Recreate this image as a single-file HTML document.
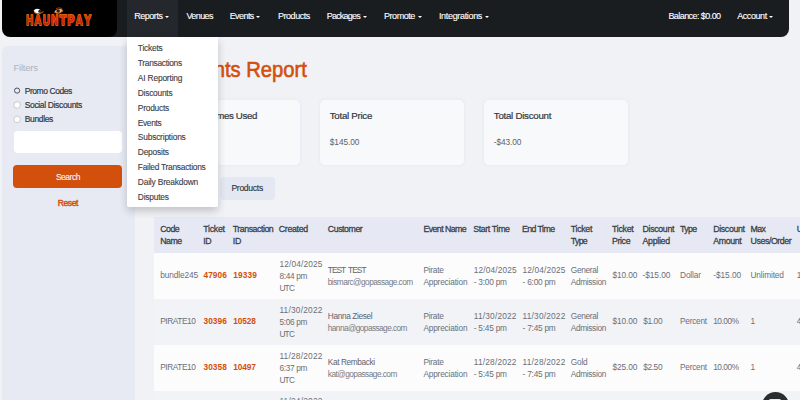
<!DOCTYPE html>
<html lang="en">
<head>
<meta charset="utf-8">
<title>Discounts Report</title>
<style>
*{box-sizing:border-box;margin:0;padding:0}
html,body{width:800px;height:400px;overflow:hidden}
body{background:#f1f2f6;font-family:"Liberation Sans",sans-serif;color:#3b4047;position:relative}
.a{position:absolute;white-space:nowrap}
/* navbar */
#nav{position:absolute;left:110px;top:0;width:679px;height:36.8px;background:#1a1d20;border-radius:0 0 8px 0}
#logo{position:absolute;left:2px;top:0;width:114.8px;height:36.8px;background:#000;border-radius:0 0 8px 8px}
#navact{position:absolute;left:126.8px;top:0;width:51.4px;height:36.8px;background:#24272b}
.ni{font-size:9px;line-height:10px;color:#fff;-webkit-text-stroke:0.12px #fff}
.caret{display:inline-block;width:0;height:0;border-left:2.1px solid transparent;border-right:2.1px solid transparent;border-top:2.3px solid #fff;vertical-align:1.3px;margin-left:2.6px}
/* sidebar */
#side{position:absolute;left:2px;top:46px;width:132.8px;height:360px;background:#e7eaf3;border-radius:6px 0 0 0}
.flt{color:#b0b5bd}
.rad{position:absolute;left:13.5px;width:6.6px;height:6.6px;border:0.8px solid #9a9ea6;border-radius:50%;background:#fff}
.rad.on{border-color:#555;background:#f4f4f6}
.rl{color:#33383f;-webkit-text-stroke:0.2px #33383f}
#inp{position:absolute;left:13.7px;top:131.2px;width:108.3px;height:21.8px;background:#fff;border-radius:4px}
#btn{position:absolute;left:13.2px;top:165px;width:109.3px;height:23px;background:#d34f0c;border-radius:4px}
.bt{color:#fdf3ee;-webkit-text-stroke:0.1px #fdf3ee}
.rs{color:#d34f0c;-webkit-text-stroke:0.45px #d34f0c}
/* dropdown */
#dd{position:absolute;left:126.8px;top:36.8px;width:90.8px;height:170.4px;background:#fff;border-radius:0 0 2px 2px;box-shadow:0 4px 9px rgba(0,0,0,.2)}
.di{color:#3b4047;-webkit-text-stroke:0.12px #3b4047}
/* main */
#h1{position:absolute;left:151.6px;top:56.9px;font-size:22.4px;line-height:26px;color:#d34f0c;white-space:nowrap;transform:scaleX(0.902);transform-origin:0 50%;-webkit-text-stroke:0.6px #d34f0c}
.card{position:absolute;top:99.6px;width:144px;height:65.5px;background:#f8f9fb;border-radius:5px;box-shadow:0 0 3px rgba(200,205,220,.35)}
.ct{color:#33383f;-webkit-text-stroke:0.2px #33383f}
.cv{color:#5d626a}
.tab{position:absolute;top:177px;height:22.5px;background:#e4e8f2;border-radius:4px}
.tt{color:#33383f;-webkit-text-stroke:0.15px #33383f}
/* table */
table{position:absolute;left:154.4px;top:217px;border-collapse:collapse;table-layout:fixed;width:706px}
th,td{padding:0 0 0 5.8px;text-align:left;vertical-align:middle;font-weight:normal;overflow:visible;white-space:nowrap}
th{font-size:8.8px;line-height:11.8px;color:#3a3f46;vertical-align:top;padding-top:7.4px;-webkit-text-stroke:0.28px #3a3f46}
thead tr{height:36px;background:#e6e9f3}
tbody tr{height:46px;background:#fcfcfd}
tbody tr:nth-child(even){background:#f2f3f7}
td{font-size:8.3px;line-height:11.8px;color:#6a6f77;padding-top:1.3px}
td.s{padding-top:0;padding-bottom:0.7px}
td.dt{padding-left:6.4px}
tbody tr:last-child td{padding-top:0;padding-bottom:0.6px}
td b{color:#d34f0c;font-weight:bold;position:relative;left:0.4px}
.nm{color:#5f646c}.em{color:#767b83}
#chat{position:absolute;left:761.5px;top:392.1px;width:27.4px;height:27.4px;border-radius:50%;background:#2b2c2f}
#chat i{position:absolute;left:7.8px;top:6.8px;width:12px;height:9px;border-radius:1.6px;background:#e9e9ec}
</style>
</head>
<body>
<div id="side"></div>
<div id="nav"></div>
<div id="navact"></div>
<div id="logo">
<svg width="116" height="37" viewBox="0 0 116 37" style="position:absolute;left:-2px;top:0">
<defs><linearGradient id="fl" x1="0" y1="0" x2="0" y2="1"><stop offset="0" stop-color="#e8440a"/><stop offset="0.5" stop-color="#cc2408"/><stop offset="1" stop-color="#b01806"/></linearGradient></defs>
<text y="25.3" font-family="Liberation Sans, sans-serif" font-weight="bold" font-size="15.4" fill="url(#fl)" stroke="#dc5e0c" stroke-width="2.1" stroke-linejoin="round" paint-order="stroke"><tspan x="26.2" textLength="6.9" lengthAdjust="spacingAndGlyphs">H</tspan><tspan x="34.6" textLength="6.9" lengthAdjust="spacingAndGlyphs">A</tspan><tspan x="43.0" textLength="6.9" lengthAdjust="spacingAndGlyphs">U</tspan><tspan x="51.2" textLength="6.9" lengthAdjust="spacingAndGlyphs">N</tspan><tspan x="59.6" textLength="6.9" lengthAdjust="spacingAndGlyphs">T</tspan><tspan x="67.6" textLength="6.9" lengthAdjust="spacingAndGlyphs">P</tspan><tspan x="75.8" textLength="6.9" lengthAdjust="spacingAndGlyphs">A</tspan><tspan x="84.2" textLength="6.9" lengthAdjust="spacingAndGlyphs">Y</tspan></text>
<g transform="translate(0,0.6)"><path d="M33.6 10.2 Q36 6.6 40.6 9.4 Q41.4 11.6 39.4 12.6 Q35.4 13.4 33.6 10.2Z" fill="#fff"/>
<circle cx="39.8" cy="10.6" r="1.5" fill="#2a1a10"/>
<path d="M34.2 12 Q38.6 14.6 43.6 11" stroke="#e86a10" stroke-width="1" fill="none"/>
<path d="M62.8 9.6 Q59.6 6.8 55.2 9.8 Q54.2 11.8 56.4 12.6 Q60.6 13.4 62.8 9.6Z" fill="#c9b68e"/>
<circle cx="58.2" cy="10.4" r="1.7" fill="#2a1a10"/>
<path d="M54 11.2 Q58 14.4 63.2 10.2" stroke="#e86a10" stroke-width="1" fill="none"/>
<path d="M56 8 Q60 6 62.6 8.4" stroke="#b8400c" stroke-width="0.8" fill="none"/></g>
</svg>
</div>
<span class="a ni" style="left:134.20px;top:11.00px"><span style="letter-spacing:-0.46px">Reports</span><i class="caret"></i></span>
<span class="a ni" style="left:186.45px;top:11.00px"><span style="letter-spacing:-0.59px">Venues</span></span>
<span class="a ni" style="left:229.70px;top:11.00px"><span style="letter-spacing:-0.58px">Events</span><i class="caret"></i></span>
<span class="a ni" style="left:277.95px;top:11.00px"><span style="letter-spacing:-0.44px">Products</span></span>
<span class="a ni" style="left:326.70px;top:11.00px"><span style="letter-spacing:-0.78px">Packages</span><i class="caret"></i></span>
<span class="a ni" style="left:383.95px;top:11.00px"><span style="letter-spacing:-0.43px">Promote</span><i class="caret"></i></span>
<span class="a ni" style="left:438.95px;top:11.00px"><span style="letter-spacing:-0.33px">Integrations</span><i class="caret"></i></span>
<span class="a ni" style="left:668.45px;top:11.00px"><span style="letter-spacing:-0.57px">Balance: $0.00</span></span>
<span class="a ni" style="left:737.20px;top:11.00px"><span style="letter-spacing:-0.43px">Account</span><i class="caret"></i></span>

<span class="a flt" style="left:13.40px;top:61.92px;font-size:9.6px;line-height:11.5px;"><span style="letter-spacing:-0.23px">Filters</span></span><svg class="a" style="left:0;top:0" width="140" height="140" viewBox="0 0 140 140"><circle cx="17.1" cy="90.6" r="2.6" fill="#ececf0" stroke="#4c5056" stroke-width="1"/><circle cx="17.1" cy="105" r="3.3" fill="#fff" stroke="#b4b8c0" stroke-width="0.7"/><circle cx="17.1" cy="119.4" r="3.3" fill="#fff" stroke="#b4b8c0" stroke-width="0.7"/></svg>
<span class="a rl" style="left:24.70px;top:85.70px;font-size:8.5px;line-height:10.2px;"><span style="letter-spacing:-0.43px">Promo Codes</span></span>
<span class="a rl" style="left:24.70px;top:99.95px;font-size:8.5px;line-height:10.2px;"><span style="letter-spacing:-0.35px">Social Discounts</span></span>
<span class="a rl" style="left:24.70px;top:114.20px;font-size:8.5px;line-height:10.2px;"><span style="letter-spacing:-0.35px">Bundles</span></span>

<div id="inp"></div>
<div id="btn"></div>
<span class="a bt" style="left:55.9px;top:171.9px;font-size:8.5px;line-height:10.2px"><span style="letter-spacing:-0.49px">Search</span></span>
<span class="a rs" style="left:57.7px;top:197.6px;font-size:8.5px;line-height:10.2px"><span style="letter-spacing:-0.39px">Reset</span></span>

<div id="h1">Discounts <span>Report</span></div>
<div class="card" style="left:156px"></div>
<div class="card" style="left:320.2px"></div>
<div class="card" style="left:484.2px"></div>
<span class="a ct" style="left:164.8px;top:109.9px;font-size:9.7px;line-height:12px"><span style="letter-spacing:-0.34px">Number of Times Used</span></span>
<span class="a cv" style="left:165px;top:136.6px;font-size:8.3px;line-height:10px"><span style="letter-spacing:-0.19px">11</span></span>
<span class="a ct" style="left:329.8px;top:109.9px;font-size:9.7px;line-height:12px"><span style="letter-spacing:-0.27px">Total Price</span></span>
<span class="a cv" style="left:329.8px;top:136.6px;font-size:8.3px;line-height:10px"><span style="letter-spacing:-0.07px">$145.00</span></span>
<span class="a ct" style="left:493.8px;top:109.9px;font-size:9.7px;line-height:12px"><span style="letter-spacing:-0.25px">Total Discount</span></span>
<span class="a cv" style="left:493.8px;top:136.6px;font-size:8.3px;line-height:10px"><span style="letter-spacing:-0.09px">-$43.00</span></span>
<div class="tab" style="left:155.5px;width:60px;background:#d34f0c"></div>
<span class="a tt" style="left:171px;top:183.2px;font-size:8.6px;line-height:10px;color:#fff"><span style="letter-spacing:-0.09px">Tickets</span></span>
<div class="tab" style="left:219.5px;width:55.6px"></div>
<span class="a tt" style="left:231.4px;top:183.2px;font-size:8.6px;line-height:10px"><span style="letter-spacing:-0.30px">Products</span></span>

<table>
<colgroup><col style="width:43px"><col style="width:29.6px"><col style="width:46px"><col style="width:49px"><col style="width:95.6px"><col style="width:49.8px"><col style="width:48.8px"><col style="width:48.8px"><col style="width:41.2px"><col style="width:30.6px"><col style="width:37.5px"><col style="width:33.1px"><col style="width:37.4px"><col style="width:46.2px"><col style="width:69.4px"></colgroup>
<thead><tr><th><span style="letter-spacing:-0.50px">Code</span><br><span style="letter-spacing:-0.49px">Name</span></th><th><span style="letter-spacing:-0.27px">Ticket</span><br><span style="letter-spacing:-0.27px">ID</span></th><th><span style="letter-spacing:-0.47px">Transaction</span><br><span style="letter-spacing:-0.27px">ID</span></th><th><span style="letter-spacing:-0.33px">Created</span></th><th><span style="letter-spacing:-0.45px">Customer</span></th><th><span style="letter-spacing:-0.56px">Event Name</span></th><th><span style="letter-spacing:-0.36px">Start Time</span></th><th><span style="letter-spacing:-0.58px">End Time</span></th><th><span style="letter-spacing:-0.31px">Ticket</span><br><span style="letter-spacing:-0.70px">Type</span></th><th><span style="letter-spacing:-0.27px">Ticket</span><br><span style="letter-spacing:-0.36px">Price</span></th><th><span style="letter-spacing:-0.34px">Discount</span><br><span style="letter-spacing:-0.30px">Applied</span></th><th><span style="letter-spacing:-0.64px">Type</span></th><th><span style="letter-spacing:-0.34px">Discount</span><br><span style="letter-spacing:-0.34px">Amount</span></th><th><span style="letter-spacing:-0.62px">Max</span><br><span style="letter-spacing:-0.42px">Uses/Order</span></th><th><span style="letter-spacing:-0.95px">Uses</span></th></tr></thead>
<tbody><tr><td class="s"><span style="letter-spacing:-0.11px">bundle245</span></td><td class="s"><b><span style="letter-spacing:0.03px">47906</span></b></td><td class="s"><b><span style="letter-spacing:0.13px">19339</span></b></td><td class="dt"><span style="letter-spacing:0.17px">12/04/2025</span><br><span style="letter-spacing:-0.32px">8:44 pm</span><br><span style="letter-spacing:-0.77px">UTC</span></td><td><span class="nm" style="word-spacing:1.8px"><span style="letter-spacing:-0.94px">TEST TEST</span></span><br><span class="em"><span style="letter-spacing:-0.53px">bismarc@gopassage.com</span></span></td><td><span style="letter-spacing:-0.24px">Pirate</span><br><span style="letter-spacing:-0.18px">Appreciation</span></td><td class="dt"><span style="letter-spacing:0.14px">12/04/2025</span><br><span style="letter-spacing:-0.23px">- 3:00 pm</span></td><td class="dt"><span style="letter-spacing:0.14px">12/04/2025</span><br><span style="letter-spacing:-0.23px">- 6:00 pm</span></td><td><span style="letter-spacing:-0.33px">General</span><br><span style="letter-spacing:-0.34px">Admission</span></td><td class="dt s"><span style="letter-spacing:-0.11px">$10.00</span></td><td class="s"><span style="letter-spacing:-0.06px">-$15.00</span></td><td class="s"><span style="letter-spacing:-0.15px">Dollar</span></td><td class="s"><span style="letter-spacing:-0.02px">-$15.00</span></td><td class="s"><span style="letter-spacing:-0.15px">Unlimited</span></td><td class="s"><span style="letter-spacing:-1.20px">1</span></td></tr><tr><td class="s"><span style="letter-spacing:-0.42px">PIRATE10</span></td><td class="s"><b><span style="letter-spacing:0.03px">30396</span></b></td><td class="s"><b><span style="letter-spacing:-0.07px">10528</span></b></td><td class="dt"><span style="letter-spacing:0.23px">11/30/2022</span><br><span style="letter-spacing:-0.32px">5:06 pm</span><br><span style="letter-spacing:-0.77px">UTC</span></td><td><span class="nm"><span style="letter-spacing:-0.37px">Hanna Ziesel</span></span><br><span class="em"><span style="letter-spacing:-0.58px">hanna@gopassage.com</span></span></td><td><span style="letter-spacing:-0.24px">Pirate</span><br><span style="letter-spacing:-0.18px">Appreciation</span></td><td class="dt"><span style="letter-spacing:0.20px">11/30/2022</span><br><span style="letter-spacing:-0.23px">- 5:45 pm</span></td><td class="dt"><span style="letter-spacing:0.20px">11/30/2022</span><br><span style="letter-spacing:-0.23px">- 7:45 pm</span></td><td><span style="letter-spacing:-0.33px">General</span><br><span style="letter-spacing:-0.34px">Admission</span></td><td class="dt s"><span style="letter-spacing:-0.11px">$10.00</span></td><td class="dt s"><span style="letter-spacing:-0.35px">$1.00</span></td><td class="s"><span style="letter-spacing:-0.26px">Percent</span></td><td class="s"><span style="letter-spacing:-0.44px">10.00%</span></td><td class="s"><span style="letter-spacing:-1.20px">1</span></td><td class="s"><span style="letter-spacing:-1.20px">4</span></td></tr><tr><td class="s"><span style="letter-spacing:-0.42px">PIRATE10</span></td><td class="s"><b><span style="letter-spacing:0.03px">30358</span></b></td><td class="s"><b><span style="letter-spacing:-0.07px">10497</span></b></td><td class="dt"><span style="letter-spacing:0.23px">11/28/2022</span><br><span style="letter-spacing:-0.32px">6:37 pm</span><br><span style="letter-spacing:-0.77px">UTC</span></td><td><span class="nm"><span style="letter-spacing:-0.39px">Kat Rembacki</span></span><br><span class="em"><span style="letter-spacing:-0.53px">kat@gopassage.com</span></span></td><td><span style="letter-spacing:-0.24px">Pirate</span><br><span style="letter-spacing:-0.18px">Appreciation</span></td><td class="dt"><span style="letter-spacing:0.20px">11/28/2022</span><br><span style="letter-spacing:-0.23px">- 5:45 pm</span></td><td class="dt"><span style="letter-spacing:0.20px">11/28/2022</span><br><span style="letter-spacing:-0.23px">- 7:45 pm</span></td><td><span style="letter-spacing:-0.20px">Gold</span><br><span style="letter-spacing:-0.34px">Admission</span></td><td class="dt s"><span style="letter-spacing:-0.11px">$25.00</span></td><td class="dt s"><span style="letter-spacing:-0.35px">$2.50</span></td><td class="s"><span style="letter-spacing:-0.26px">Percent</span></td><td class="s"><span style="letter-spacing:-0.44px">10.00%</span></td><td class="s"><span style="letter-spacing:-1.20px">1</span></td><td class="s"><span style="letter-spacing:-1.20px">4</span></td></tr><tr><td class="s"><span style="letter-spacing:-0.42px">PIRATE10</span></td><td class="s"><b><span style="letter-spacing:0.03px">30321</span></b></td><td class="s"><b><span style="letter-spacing:-0.07px">10466</span></b></td><td class="dt"><span style="letter-spacing:0.23px">11/24/2022</span><br><span style="letter-spacing:-0.32px">4:12 pm</span><br><span style="letter-spacing:-0.77px">UTC</span></td><td><span class="nm"><span style="letter-spacing:-0.46px">Sam Walker</span></span><br><span class="em"><span style="letter-spacing:-0.73px">sam@gopassage.com</span></span></td><td><span style="letter-spacing:-0.24px">Pirate</span><br><span style="letter-spacing:-0.18px">Appreciation</span></td><td class="dt"><span style="letter-spacing:0.20px">11/24/2022</span><br><span style="letter-spacing:-0.23px">- 5:45 pm</span></td><td class="dt"><span style="letter-spacing:0.20px">11/24/2022</span><br><span style="letter-spacing:-0.23px">- 7:45 pm</span></td><td><span style="letter-spacing:-0.33px">General</span><br><span style="letter-spacing:-0.34px">Admission</span></td><td class="dt s"><span style="letter-spacing:-0.11px">$10.00</span></td><td class="dt s"><span style="letter-spacing:-0.35px">$1.00</span></td><td class="s"><span style="letter-spacing:-0.26px">Percent</span></td><td class="s"><span style="letter-spacing:-0.44px">10.00%</span></td><td class="s"><span style="letter-spacing:-1.20px">1</span></td><td class="s"><span style="letter-spacing:-1.20px">4</span></td></tr></tbody>
</table>

<div id="dd"></div>
<span class="a di" style="left:137.80px;top:43.04px;font-size:8.4px;line-height:10.1px;"><span style="letter-spacing:-0.21px">Tickets</span></span>
<span class="a di" style="left:137.80px;top:58.04px;font-size:8.4px;line-height:10.1px;"><span style="letter-spacing:-0.30px">Transactions</span></span>
<span class="a di" style="left:137.80px;top:73.04px;font-size:8.4px;line-height:10.1px;"><span style="letter-spacing:-0.17px">AI Reporting</span></span>
<span class="a di" style="left:137.80px;top:88.04px;font-size:8.4px;line-height:10.1px;"><span style="letter-spacing:-0.25px">Discounts</span></span>
<span class="a di" style="left:137.80px;top:103.04px;font-size:8.4px;line-height:10.1px;"><span style="letter-spacing:-0.23px">Products</span></span>
<span class="a di" style="left:137.80px;top:118.04px;font-size:8.4px;line-height:10.1px;"><span style="letter-spacing:-0.35px">Events</span></span>
<span class="a di" style="left:137.80px;top:132.04px;font-size:8.4px;line-height:10.1px;"><span style="letter-spacing:-0.19px">Subscriptions</span></span>
<span class="a di" style="left:137.80px;top:147.04px;font-size:8.4px;line-height:10.1px;"><span style="letter-spacing:-0.20px">Deposits</span></span>
<span class="a di" style="left:137.80px;top:162.04px;font-size:8.4px;line-height:10.1px;"><span style="letter-spacing:-0.26px">Failed Transactions</span></span>
<span class="a di" style="left:137.80px;top:177.04px;font-size:8.4px;line-height:10.1px;"><span style="letter-spacing:-0.17px">Daily Breakdown</span></span>
<span class="a di" style="left:137.80px;top:192.04px;font-size:8.4px;line-height:10.1px;"><span style="letter-spacing:-0.20px">Disputes</span></span>

<div id="chat"><i></i></div>
</body>
</html>
